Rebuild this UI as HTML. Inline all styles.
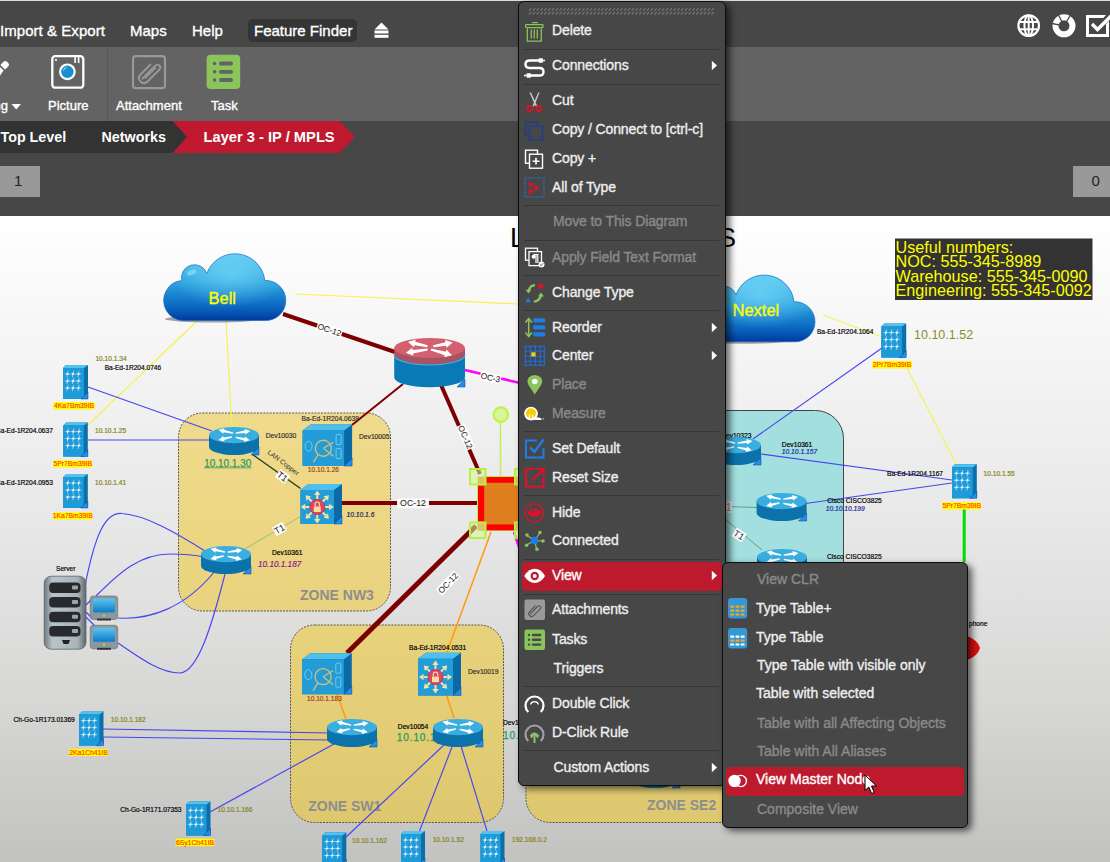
<!DOCTYPE html><html><head><meta charset="utf-8"><title>Diagram</title><style>
*{margin:0;padding:0;box-sizing:border-box}
html,body{width:1110px;height:862px;overflow:hidden;background:#474747;font-family:"Liberation Sans",sans-serif}
.t{position:absolute;white-space:nowrap;line-height:1;-webkit-text-stroke:0.35px currentColor}
.nb{-webkit-text-stroke:0}
.abs{position:absolute}
svg{position:absolute;overflow:visible}
</style></head><body>
<svg style="left:0;top:216px" width="1110" height="646" viewBox="0 216 1110 646" font-family="Liberation Sans, sans-serif"><defs>
<linearGradient id="bg" x1="0" y1="216" x2="0" y2="862" gradientUnits="userSpaceOnUse">
<stop offset="0" stop-color="#ffffff"/><stop offset="0.45" stop-color="#e9e9e9"/><stop offset="0.75" stop-color="#d7d7d6"/><stop offset="1" stop-color="#c2c2c0"/></linearGradient>
<linearGradient id="zone" x1="0" y1="216" x2="0" y2="862" gradientUnits="userSpaceOnUse">
<stop offset="0" stop-color="#f6e29e"/><stop offset="0.5" stop-color="#ecd682"/><stop offset="1" stop-color="#dcc66c"/></linearGradient>
<linearGradient id="cloudg" x1="0" y1="0" x2="0" y2="1">
<stop offset="0" stop-color="#5ccbef"/><stop offset="0.45" stop-color="#2a9fdc"/><stop offset="0.8" stop-color="#0a66c0"/><stop offset="1" stop-color="#003a9c"/></linearGradient>
<radialGradient id="cloudh" cx="0.55" cy="0.3" r="0.5"><stop offset="0" stop-color="#7fe0ff" stop-opacity="0.6"/><stop offset="1" stop-color="#7fe0ff" stop-opacity="0"/></radialGradient>
<linearGradient id="srv" x1="0" y1="0" x2="1" y2="0"><stop offset="0" stop-color="#6d7880"/><stop offset="0.2" stop-color="#b9c4ca"/><stop offset="0.8" stop-color="#a9b4ba"/><stop offset="1" stop-color="#5d686e"/></linearGradient>
<linearGradient id="scr" x1="0" y1="0" x2="0" y2="1"><stop offset="0" stop-color="#5ec4f0"/><stop offset="1" stop-color="#0a7cc8"/></linearGradient>
</defs><rect x="0" y="216" width="1110" height="646" fill="url(#bg)"/><rect x="178.5" y="413" width="212" height="198" rx="24" fill="url(#zone)" stroke="#555" stroke-width="1" stroke-dasharray="2 1.2"/><rect x="290.5" y="625" width="213" height="197.5" rx="24" fill="url(#zone)" stroke="#555" stroke-width="1" stroke-dasharray="2 1.2"/><rect x="526" y="600" width="260" height="222.5" rx="24" fill="url(#zone)" stroke="#555" stroke-width="1" stroke-dasharray="2 1.2"/><rect x="640" y="410.5" width="203.5" height="300" rx="28" fill="#a3dfdf" stroke="#444" stroke-width="1"/><text x="300" y="599.6" font-size="14" fill="#8e8e8e" font-weight="bold">ZONE NW3</text><text x="308.2" y="810.6" font-size="14" fill="#8e8e8e" font-weight="bold">ZONE SW1</text><text x="647" y="810.4" font-size="14" fill="#8e8e8e" font-weight="bold">ZONE SE2</text><text x="510" y="246.5" font-size="27" fill="#000" >L</text><text x="718" y="246.5" font-size="27" fill="#000" >S</text><rect x="895" y="238.5" width="197.5" height="61.5" fill="#333"/><text x="895.5" y="252.7" font-size="16.2" fill="#ffff00" >Useful numbers:</text><text x="895.5" y="267.2" font-size="16.2" fill="#ffff00" >NOC: 555-345-8989</text><text x="895.5" y="281.7" font-size="16.2" fill="#ffff00" >Warehouse: 555-345-0090</text><text x="895.5" y="296.2" font-size="16.2" fill="#ffff00" >Engineering: 555-345-0092</text><line x1="197" y1="321" x2="88" y2="425" stroke="#f6f250" stroke-width="1.15" /><line x1="226" y1="321" x2="232" y2="428" stroke="#f6f250" stroke-width="1.15" /><line x1="295" y1="294" x2="720" y2="313" stroke="#f6f250" stroke-width="1.15" /><line x1="823" y1="315" x2="882" y2="337" stroke="#f6f250" stroke-width="1.15" /><line x1="907" y1="368" x2="956" y2="464" stroke="#f6f250" stroke-width="1.15" /><line x1="88" y1="387" x2="212" y2="431" stroke="#4646f2" stroke-width="1.15" /><line x1="88" y1="440" x2="211" y2="440" stroke="#4646f2" stroke-width="1.15" /><path d="M85 586 C 95 535, 105 512, 122 513.5 C 145 515, 175 532, 205 551" fill="none" stroke="#4646f2" stroke-width="1.15"/><path d="M96 596 C 120 572, 140 554, 170 554 C 185 554, 195 555, 205 557" fill="none" stroke="#4646f2" stroke-width="1.15"/><path d="M118 618 C 150 620, 185 608, 215 571" fill="none" stroke="#4646f2" stroke-width="1.15"/><path d="M118 643 C 140 658, 160 673, 180 673 C 198 672, 212 625, 225 574" fill="none" stroke="#4646f2" stroke-width="1.15"/><line x1="86" y1="605" x2="92" y2="599" stroke="#4646f2" stroke-width="1.15" /><line x1="86" y1="612" x2="92" y2="618" stroke="#4646f2" stroke-width="1.15" /><line x1="86" y1="617" x2="95" y2="626" stroke="#4646f2" stroke-width="1.15" /><line x1="103" y1="729" x2="330" y2="733" stroke="#4646f2" stroke-width="1.15" /><line x1="103" y1="737" x2="330" y2="740" stroke="#4646f2" stroke-width="1.15" /><line x1="210" y1="812" x2="334" y2="744" stroke="#4646f2" stroke-width="1.15" /><line x1="444" y1="745" x2="345" y2="838" stroke="#4646f2" stroke-width="1.15" /><line x1="452" y1="747" x2="419.5" y2="831" stroke="#4646f2" stroke-width="1.15" /><line x1="461" y1="746" x2="487" y2="831" stroke="#4646f2" stroke-width="1.15" /><line x1="753" y1="439" x2="882" y2="348" stroke="#4646f2" stroke-width="1.15" /><line x1="761" y1="454" x2="952" y2="480" stroke="#4646f2" stroke-width="1.15" /><line x1="805.5" y1="503.5" x2="952" y2="483" stroke="#4646f2" stroke-width="1.15" /><line x1="283" y1="314" x2="395" y2="352" stroke="#7d0000" stroke-width="4" /><line x1="441" y1="385" x2="480" y2="474" stroke="#7d0000" stroke-width="4" /><line x1="403" y1="384" x2="352" y2="425" stroke="#7d0000" stroke-width="2" /><line x1="342" y1="503" x2="477" y2="503" stroke="#7d0000" stroke-width="4" /><line x1="476" y1="526" x2="347" y2="653" stroke="#7d0000" stroke-width="5" /><line x1="465" y1="370" x2="520" y2="383" stroke="#ff00ff" stroke-width="2.5" /><line x1="514" y1="532" x2="520" y2="550" stroke="#ff00ff" stroke-width="2.5" /><line x1="491" y1="532" x2="447" y2="652" stroke="#ff9a10" stroke-width="1.5" /><line x1="337" y1="694" x2="346" y2="719" stroke="#ff9a10" stroke-width="1.5" /><line x1="446.5" y1="695" x2="454" y2="718" stroke="#ff9a10" stroke-width="1.5" /><line x1="500.5" y1="422" x2="500.5" y2="477" stroke="#c0f050" stroke-width="1.5" /><line x1="245.5" y1="548.5" x2="300.5" y2="516.5" stroke="#90c080" stroke-width="1" /><line x1="252" y1="454" x2="300.5" y2="488.5" stroke="#1a3a1a" stroke-width="1.3" /><line x1="964.2" y1="509" x2="964.2" y2="562" stroke="#00dd00" stroke-width="3" /><line x1="726" y1="506.5" x2="757" y2="507.5" stroke="#60a080" stroke-width="1" /><line x1="726" y1="520" x2="762" y2="550" stroke="#60a080" stroke-width="1" /><g transform="translate(282,464.5) rotate(37)"><text x="0" y="0" font-size="6.8" fill="#333" text-anchor="middle">LAN Copper</text></g><g transform="translate(329.5,329.7) rotate(18.6)"><rect x="-13.034999999999998" y="-4.565" width="26.069999999999997" height="9.13" fill="#fff" opacity="0.95"/><text x="0" y="2.988" font-size="8.3" fill="#222" text-anchor="middle">OC-12</text></g><g transform="translate(465.5,437) rotate(66)"><rect x="-13.034999999999998" y="-4.565" width="26.069999999999997" height="9.13" fill="#fff" opacity="0.95"/><text x="0" y="2.988" font-size="8.3" fill="#222" text-anchor="middle">OC-12</text></g><g transform="translate(413,503.3) rotate(0)"><rect x="-16.0" y="-4.840000000000001" width="32" height="9.680000000000001" fill="#fff" opacity="0.95"/><text x="0" y="3.168" font-size="8.8" fill="#222" text-anchor="middle">OC-12</text></g><g transform="translate(448,583) rotate(-47)"><rect x="-13.034999999999998" y="-4.565" width="26.069999999999997" height="9.13" fill="#fff" opacity="0.95"/><text x="0" y="2.988" font-size="8.3" fill="#222" text-anchor="middle">OC-12</text></g><g transform="translate(490.5,377.5) rotate(13)"><rect x="-10.628" y="-4.565" width="21.256" height="9.13" fill="#fff" opacity="0.95"/><text x="0" y="2.988" font-size="8.3" fill="#222" text-anchor="middle">OC-3</text></g><g transform="translate(282.5,476.5) rotate(36)"><rect x="-6.0" y="-4.95" width="12" height="9.9" fill="#fff" opacity="0.95"/><text x="0" y="3.2399999999999998" font-size="9" fill="#222" text-anchor="middle">T1</text></g><g transform="translate(279.5,529) rotate(-30)"><rect x="-6.0" y="-4.95" width="12" height="9.9" fill="#fff" opacity="0.95"/><text x="0" y="3.2399999999999998" font-size="9" fill="#222" text-anchor="middle">T1</text></g><g transform="translate(739,535) rotate(33)"><rect x="-6.0" y="-4.95" width="12" height="9.9" fill="#fff" opacity="0.95"/><text x="0" y="3.2399999999999998" font-size="9" fill="#222" text-anchor="middle">T1</text></g><rect x="725" y="501" width="7" height="12" fill="#e8e8e8"/><text x="726" y="511" font-size="10" fill="#888">1</text><ellipse cx="212.8" cy="319.0" rx="48" ry="3.5" fill="#000" opacity="0.35"/><path d="M182.8 320.5 A20 20 0 0 1 165.8 291.5 A20 20 0 0 1 181.8 280.5 A13 13 0 0 1 206.8 273.5 A30 30 0 0 1 264.8 280.5 A20 20 0 0 1 285.8 300.5 A20 20 0 0 1 265.8 320.5 Z" fill="url(#cloudg)"/><path d="M182.8 320.5 A20 20 0 0 1 165.8 291.5 A20 20 0 0 1 181.8 280.5 A13 13 0 0 1 206.8 273.5 A30 30 0 0 1 264.8 280.5 A20 20 0 0 1 285.8 300.5 A20 20 0 0 1 265.8 320.5 Z" fill="url(#cloudh)" stroke="#1a6cc4" stroke-width="0.7"/><ellipse cx="191.8" cy="272.5" rx="5" ry="2.5" fill="#a8ecff" opacity="0.5" transform="rotate(-20 191.8 272.5)"/><text x="208.5" y="303.5" font-size="16.5" fill="#ffff00" stroke="#ffff00" stroke-width="0.35">Bell</text><ellipse cx="742" cy="340.3" rx="48" ry="3.5" fill="#000" opacity="0.35"/><path d="M712 341.8 A20 20 0 0 1 695 312.8 A20 20 0 0 1 711 301.8 A13 13 0 0 1 736 294.8 A30 30 0 0 1 794 301.8 A20 20 0 0 1 815 321.8 A20 20 0 0 1 795 341.8 Z" fill="url(#cloudg)"/><path d="M712 341.8 A20 20 0 0 1 695 312.8 A20 20 0 0 1 711 301.8 A13 13 0 0 1 736 294.8 A30 30 0 0 1 794 301.8 A20 20 0 0 1 815 321.8 A20 20 0 0 1 795 341.8 Z" fill="url(#cloudh)" stroke="#1a6cc4" stroke-width="0.7"/><ellipse cx="721" cy="293.8" rx="5" ry="2.5" fill="#a8ecff" opacity="0.5" transform="rotate(-20 721 293.8)"/><text x="732.5" y="315.7" font-size="16.5" fill="#ffff00" stroke="#ffff00" stroke-width="0.35">Nextel</text><text x="721" y="437.5" font-size="6.7" fill="#000"  stroke="#000" stroke-width="0.18">Dev10323</text><text x="396.8" y="740.5" font-size="10" fill="#2a9a5a" letter-spacing="0.9" stroke="#2a9a5a" stroke-width="0.25">10.10.1.1</text><path d="M209 435.12 V446.88 A25.0 8.12 0 0 0 259 446.88 V435.12Z" fill="#0b73a9"/><ellipse cx="234.0" cy="435.12" rx="25.0" ry="8.12" fill="#3aaee0"/><path d="M233.33 432.45 L224.15 429.76 L224.47 428.29 L218.50 429.87 L223.29 433.77 L223.60 432.30 L233.07 433.63Z" fill="#fff"/><path d="M235.78 433.63 L245.14 433.02 L245.35 434.50 L250.40 430.96 L244.56 428.96 L244.77 430.44 L235.62 432.45Z" fill="#fff"/><path d="M231.76 436.22 L223.55 437.44 L223.21 435.98 L218.50 439.97 L224.50 441.43 L224.15 439.97 L232.04 437.39Z" fill="#fff"/><path d="M235.57 437.88 L244.15 440.47 L243.83 441.93 L249.80 440.37 L245.02 436.46 L244.70 437.93 L235.83 436.71Z" fill="#fff"/><path d="M259 447 L259 455 L251 455Z" fill="#1e8ef0" stroke="#0a3a8a" stroke-width="0.5"/><path d="M201 554.12 V565.88 A25.0 8.12 0 0 0 251 565.88 V554.12Z" fill="#0b73a9"/><ellipse cx="226.0" cy="554.12" rx="25.0" ry="8.12" fill="#3aaee0"/><path d="M225.33 551.45 L216.15 548.76 L216.47 547.29 L210.50 548.87 L215.29 552.77 L215.60 551.30 L225.07 552.63Z" fill="#fff"/><path d="M227.78 552.63 L237.14 552.02 L237.35 553.50 L242.40 549.96 L236.56 547.96 L236.77 549.44 L227.62 551.45Z" fill="#fff"/><path d="M223.76 555.22 L215.55 556.44 L215.21 554.98 L210.50 558.97 L216.50 560.43 L216.15 558.97 L224.04 556.39Z" fill="#fff"/><path d="M227.57 556.88 L236.15 559.47 L235.83 560.93 L241.80 559.37 L237.02 555.46 L236.70 556.93 L227.83 555.71Z" fill="#fff"/><path d="M251 566 L251 574 L243 574Z" fill="#1e8ef0" stroke="#0a3a8a" stroke-width="0.5"/><path d="M327 727.12 V738.88 A25.0 8.12 0 0 0 377 738.88 V727.12Z" fill="#0b73a9"/><ellipse cx="352.0" cy="727.12" rx="25.0" ry="8.12" fill="#3aaee0"/><path d="M351.33 724.45 L342.15 721.76 L342.47 720.29 L336.50 721.87 L341.29 725.77 L341.60 724.30 L351.07 725.63Z" fill="#fff"/><path d="M353.78 725.63 L363.14 725.02 L363.35 726.50 L368.40 722.96 L362.56 720.96 L362.77 722.44 L353.62 724.45Z" fill="#fff"/><path d="M349.76 728.22 L341.55 729.44 L341.21 727.98 L336.50 731.97 L342.50 733.43 L342.15 731.97 L350.04 729.39Z" fill="#fff"/><path d="M353.57 729.88 L362.15 732.47 L361.83 733.93 L367.80 732.37 L363.02 728.46 L362.70 729.93 L353.83 728.71Z" fill="#fff"/><path d="M377 739 L377 747 L369 747Z" fill="#1e8ef0" stroke="#0a3a8a" stroke-width="0.5"/><path d="M433 727.12 V738.88 A25.0 8.12 0 0 0 483 738.88 V727.12Z" fill="#0b73a9"/><ellipse cx="458.0" cy="727.12" rx="25.0" ry="8.12" fill="#3aaee0"/><path d="M457.33 724.45 L448.15 721.76 L448.47 720.29 L442.50 721.87 L447.29 725.77 L447.60 724.30 L457.07 725.63Z" fill="#fff"/><path d="M459.78 725.63 L469.14 725.02 L469.35 726.50 L474.40 722.96 L468.56 720.96 L468.77 722.44 L459.62 724.45Z" fill="#fff"/><path d="M455.76 728.22 L447.55 729.44 L447.21 727.98 L442.50 731.97 L448.50 733.43 L448.15 731.97 L456.04 729.39Z" fill="#fff"/><path d="M459.57 729.88 L468.15 732.47 L467.83 733.93 L473.80 732.37 L469.02 728.46 L468.70 729.93 L459.83 728.71Z" fill="#fff"/><path d="M483 739 L483 747 L475 747Z" fill="#1e8ef0" stroke="#0a3a8a" stroke-width="0.5"/><path d="M711 445.12 V456.88 A25.0 8.12 0 0 0 761 456.88 V445.12Z" fill="#0b73a9"/><ellipse cx="736.0" cy="445.12" rx="25.0" ry="8.12" fill="#3aaee0"/><path d="M735.33 442.45 L726.15 439.76 L726.47 438.29 L720.50 439.87 L725.29 443.77 L725.60 442.30 L735.07 443.63Z" fill="#fff"/><path d="M737.78 443.63 L747.14 443.02 L747.35 444.50 L752.40 440.96 L746.56 438.96 L746.77 440.44 L737.62 442.45Z" fill="#fff"/><path d="M733.76 446.22 L725.55 447.44 L725.21 445.98 L720.50 449.97 L726.50 451.43 L726.15 449.97 L734.04 447.39Z" fill="#fff"/><path d="M737.57 447.88 L746.15 450.47 L745.83 451.93 L751.80 450.37 L747.02 446.46 L746.70 447.93 L737.83 446.71Z" fill="#fff"/><path d="M761 457 L761 465 L753 465Z" fill="#1e8ef0" stroke="#0a3a8a" stroke-width="0.5"/><path d="M756.6 501.12 V512.88 A25.0 8.12 0 0 0 806.6 512.88 V501.12Z" fill="#0b73a9"/><ellipse cx="781.6" cy="501.12" rx="25.0" ry="8.12" fill="#3aaee0"/><path d="M780.93 498.45 L771.75 495.76 L772.07 494.29 L766.10 495.87 L770.89 499.77 L771.20 498.30 L780.67 499.63Z" fill="#fff"/><path d="M783.38 499.63 L792.74 499.02 L792.95 500.50 L798.00 496.96 L792.16 494.96 L792.37 496.44 L783.22 498.45Z" fill="#fff"/><path d="M779.36 502.22 L771.15 503.44 L770.81 501.98 L766.10 505.97 L772.10 507.43 L771.75 505.97 L779.64 503.39Z" fill="#fff"/><path d="M783.17 503.88 L791.75 506.47 L791.43 507.93 L797.40 506.37 L792.62 502.46 L792.30 503.93 L783.43 502.71Z" fill="#fff"/><path d="M806.6 513 L806.6 521 L798.6 521Z" fill="#1e8ef0" stroke="#0a3a8a" stroke-width="0.5"/><path d="M757 557.12 V568.88 A25.0 8.12 0 0 0 807 568.88 V557.12Z" fill="#0b73a9"/><ellipse cx="782.0" cy="557.12" rx="25.0" ry="8.12" fill="#3aaee0"/><path d="M781.33 554.45 L772.15 551.76 L772.47 550.29 L766.50 551.87 L771.29 555.77 L771.60 554.30 L781.07 555.63Z" fill="#fff"/><path d="M783.78 555.63 L793.14 555.02 L793.35 556.50 L798.40 552.96 L792.56 550.96 L792.77 552.44 L783.62 554.45Z" fill="#fff"/><path d="M779.76 558.22 L771.55 559.44 L771.21 557.98 L766.50 561.97 L772.50 563.43 L772.15 561.97 L780.04 559.39Z" fill="#fff"/><path d="M783.57 559.88 L792.15 562.47 L791.83 563.93 L797.80 562.37 L793.02 558.46 L792.70 559.93 L783.83 558.71Z" fill="#fff"/><path d="M807 569 L807 577 L799 577Z" fill="#1e8ef0" stroke="#0a3a8a" stroke-width="0.5"/><path d="M630 768.12 V779.88 A25.0 8.12 0 0 0 680 779.88 V768.12Z" fill="#0b73a9"/><ellipse cx="655.0" cy="768.12" rx="25.0" ry="8.12" fill="#3aaee0"/><path d="M654.33 765.45 L645.15 762.76 L645.47 761.29 L639.50 762.87 L644.29 766.77 L644.60 765.30 L654.07 766.63Z" fill="#fff"/><path d="M656.78 766.63 L666.14 766.02 L666.35 767.50 L671.40 763.96 L665.56 761.96 L665.77 763.44 L656.62 765.45Z" fill="#fff"/><path d="M652.76 769.22 L644.55 770.44 L644.21 768.98 L639.50 772.97 L645.50 774.43 L645.15 772.97 L653.04 770.39Z" fill="#fff"/><path d="M656.57 770.88 L665.15 773.47 L664.83 774.93 L670.80 773.37 L666.02 769.46 L665.70 770.93 L656.83 769.71Z" fill="#fff"/><path d="M680 780 L680 788 L672 788Z" fill="#1e8ef0" stroke="#0a3a8a" stroke-width="0.5"/><path d="M394.2 355 V377.3 A35.4 10 0 0 0 465.0 377.3 V355Z" fill="#0a7ab6"/><path d="M394.2 348 V355 A35.4 10 0 0 0 465.0 355 V348Z" fill="#a65463"/><path d="M394.2 355 A35.4 10 0 0 0 465.0 355" fill="none" stroke="#3ab4ea" stroke-width="1.1"/><ellipse cx="429.59999999999997" cy="348" rx="35.4" ry="10" fill="#d35f6f"/><path d="M427.72 345.32 L415.22 341.68 L415.71 339.54 L408.00 341.90 L413.95 347.34 L414.43 345.20 L427.28 347.28Z" fill="#fff"/><path d="M433.39 347.28 L446.16 345.67 L446.57 347.83 L452.70 342.60 L445.08 339.98 L445.49 342.14 L433.01 345.32Z" fill="#fff"/><path d="M427.35 348.51 L412.56 349.89 L412.24 347.72 L405.90 352.70 L413.41 355.63 L413.09 353.45 L427.65 350.49Z" fill="#fff"/><path d="M430.73 350.46 L444.77 355.17 L444.19 357.29 L452.00 355.30 L446.32 349.58 L445.73 351.70 L431.27 348.54Z" fill="#fff"/><path d="M465 379 L465 387 L457 387Z" fill="#1e8ef0" stroke="#0a3a8a" stroke-width="0.5"/><path d="M63 368 L66 365 H88 V397 L85 399 H63Z" fill="#0c6fa8"/><path d="M63 368 L66 365 H88 L84 368Z" fill="#52c3f0"/><rect x="63" y="368" width="21" height="31" fill="#1d9ad8"/><path d="M64.9 374H70.1M68.1 370.8L66.9 377.2M70.4 374H75.6M73.6 370.8L72.4 377.2M75.9 374H81.1M79.1 370.8L77.9 377.2M64.9 381H70.1M68.1 377.8L66.9 384.2M70.4 381H75.6M73.6 377.8L72.4 384.2M75.9 381H81.1M79.1 377.8L77.9 384.2M64.9 388H70.1M68.1 384.8L66.9 391.2M70.4 388H75.6M73.6 384.8L72.4 391.2M75.9 388H81.1M79.1 384.8L77.9 391.2" stroke="#cfe6f4" stroke-width="0.7"/><circle cx="67.5" cy="374" r="1.1" fill="#f4faff"/><circle cx="73.0" cy="374" r="1.1" fill="#f4faff"/><circle cx="78.5" cy="374" r="1.1" fill="#f4faff"/><circle cx="67.5" cy="381" r="1.1" fill="#f4faff"/><circle cx="73.0" cy="381" r="1.1" fill="#f4faff"/><circle cx="78.5" cy="381" r="1.1" fill="#f4faff"/><circle cx="67.5" cy="388" r="1.1" fill="#f4faff"/><circle cx="73.0" cy="388" r="1.1" fill="#f4faff"/><circle cx="78.5" cy="388" r="1.1" fill="#f4faff"/><path d="M88 392 L88 399 L81 399Z" fill="#1e8ef0" stroke="#0a3a8a" stroke-width="0.5"/><path d="M63.3 425.6 L66.3 422.6 H87.8 V454.6 L84.8 456.6 H63.3Z" fill="#0c6fa8"/><path d="M63.3 425.6 L66.3 422.6 H87.8 L83.8 425.6Z" fill="#52c3f0"/><rect x="63.3" y="425.6" width="20.5" height="31" fill="#1d9ad8"/><path d="M65.2 431.6H70.39999999999999M68.39999999999999 428.40000000000003L67.2 434.8M70.7 431.6H75.89999999999999M73.89999999999999 428.40000000000003L72.7 434.8M76.2 431.6H81.39999999999999M79.39999999999999 428.40000000000003L78.2 434.8M65.2 438.6H70.39999999999999M68.39999999999999 435.40000000000003L67.2 441.8M70.7 438.6H75.89999999999999M73.89999999999999 435.40000000000003L72.7 441.8M76.2 438.6H81.39999999999999M79.39999999999999 435.40000000000003L78.2 441.8M65.2 445.6H70.39999999999999M68.39999999999999 442.40000000000003L67.2 448.8M70.7 445.6H75.89999999999999M73.89999999999999 442.40000000000003L72.7 448.8M76.2 445.6H81.39999999999999M79.39999999999999 442.40000000000003L78.2 448.8" stroke="#cfe6f4" stroke-width="0.7"/><circle cx="67.8" cy="431.6" r="1.1" fill="#f4faff"/><circle cx="73.3" cy="431.6" r="1.1" fill="#f4faff"/><circle cx="78.8" cy="431.6" r="1.1" fill="#f4faff"/><circle cx="67.8" cy="438.6" r="1.1" fill="#f4faff"/><circle cx="73.3" cy="438.6" r="1.1" fill="#f4faff"/><circle cx="78.8" cy="438.6" r="1.1" fill="#f4faff"/><circle cx="67.8" cy="445.6" r="1.1" fill="#f4faff"/><circle cx="73.3" cy="445.6" r="1.1" fill="#f4faff"/><circle cx="78.8" cy="445.6" r="1.1" fill="#f4faff"/><path d="M87.8 449.6 L87.8 456.6 L80.8 456.6Z" fill="#1e8ef0" stroke="#0a3a8a" stroke-width="0.5"/><path d="M63.3 477 L66.3 474 H87.8 V506 L84.8 508 H63.3Z" fill="#0c6fa8"/><path d="M63.3 477 L66.3 474 H87.8 L83.8 477Z" fill="#52c3f0"/><rect x="63.3" y="477" width="20.5" height="31" fill="#1d9ad8"/><path d="M65.2 483H70.39999999999999M68.39999999999999 479.8L67.2 486.2M70.7 483H75.89999999999999M73.89999999999999 479.8L72.7 486.2M76.2 483H81.39999999999999M79.39999999999999 479.8L78.2 486.2M65.2 490H70.39999999999999M68.39999999999999 486.8L67.2 493.2M70.7 490H75.89999999999999M73.89999999999999 486.8L72.7 493.2M76.2 490H81.39999999999999M79.39999999999999 486.8L78.2 493.2M65.2 497H70.39999999999999M68.39999999999999 493.8L67.2 500.2M70.7 497H75.89999999999999M73.89999999999999 493.8L72.7 500.2M76.2 497H81.39999999999999M79.39999999999999 493.8L78.2 500.2" stroke="#cfe6f4" stroke-width="0.7"/><circle cx="67.8" cy="483" r="1.1" fill="#f4faff"/><circle cx="73.3" cy="483" r="1.1" fill="#f4faff"/><circle cx="78.8" cy="483" r="1.1" fill="#f4faff"/><circle cx="67.8" cy="490" r="1.1" fill="#f4faff"/><circle cx="73.3" cy="490" r="1.1" fill="#f4faff"/><circle cx="78.8" cy="490" r="1.1" fill="#f4faff"/><circle cx="67.8" cy="497" r="1.1" fill="#f4faff"/><circle cx="73.3" cy="497" r="1.1" fill="#f4faff"/><circle cx="78.8" cy="497" r="1.1" fill="#f4faff"/><path d="M87.8 501 L87.8 508 L80.8 508Z" fill="#1e8ef0" stroke="#0a3a8a" stroke-width="0.5"/><path d="M79 714.6 L82 711.6 H103.5 V743.6 L100.5 745.6 H79Z" fill="#0c6fa8"/><path d="M79 714.6 L82 711.6 H103.5 L99.5 714.6Z" fill="#52c3f0"/><rect x="79" y="714.6" width="20.5" height="31" fill="#1d9ad8"/><path d="M80.9 720.6H86.1M84.1 717.4L82.9 723.8000000000001M86.4 720.6H91.6M89.6 717.4L88.4 723.8000000000001M91.9 720.6H97.1M95.1 717.4L93.9 723.8000000000001M80.9 727.6H86.1M84.1 724.4L82.9 730.8000000000001M86.4 727.6H91.6M89.6 724.4L88.4 730.8000000000001M91.9 727.6H97.1M95.1 724.4L93.9 730.8000000000001M80.9 734.6H86.1M84.1 731.4L82.9 737.8000000000001M86.4 734.6H91.6M89.6 731.4L88.4 737.8000000000001M91.9 734.6H97.1M95.1 731.4L93.9 737.8000000000001" stroke="#cfe6f4" stroke-width="0.7"/><circle cx="83.5" cy="720.6" r="1.1" fill="#f4faff"/><circle cx="89.0" cy="720.6" r="1.1" fill="#f4faff"/><circle cx="94.5" cy="720.6" r="1.1" fill="#f4faff"/><circle cx="83.5" cy="727.6" r="1.1" fill="#f4faff"/><circle cx="89.0" cy="727.6" r="1.1" fill="#f4faff"/><circle cx="94.5" cy="727.6" r="1.1" fill="#f4faff"/><circle cx="83.5" cy="734.6" r="1.1" fill="#f4faff"/><circle cx="89.0" cy="734.6" r="1.1" fill="#f4faff"/><circle cx="94.5" cy="734.6" r="1.1" fill="#f4faff"/><path d="M103.5 738.6 L103.5 745.6 L96.5 745.6Z" fill="#1e8ef0" stroke="#0a3a8a" stroke-width="0.5"/><path d="M186 804.4 L189 801.4 H210.5 V833.4 L207.5 835.4 H186Z" fill="#0c6fa8"/><path d="M186 804.4 L189 801.4 H210.5 L206.5 804.4Z" fill="#52c3f0"/><rect x="186" y="804.4" width="20.5" height="31" fill="#1d9ad8"/><path d="M187.9 810.4H193.1M191.1 807.1999999999999L189.9 813.6M193.4 810.4H198.6M196.6 807.1999999999999L195.4 813.6M198.9 810.4H204.1M202.1 807.1999999999999L200.9 813.6M187.9 817.4H193.1M191.1 814.1999999999999L189.9 820.6M193.4 817.4H198.6M196.6 814.1999999999999L195.4 820.6M198.9 817.4H204.1M202.1 814.1999999999999L200.9 820.6M187.9 824.4H193.1M191.1 821.1999999999999L189.9 827.6M193.4 824.4H198.6M196.6 821.1999999999999L195.4 827.6M198.9 824.4H204.1M202.1 821.1999999999999L200.9 827.6" stroke="#cfe6f4" stroke-width="0.7"/><circle cx="190.5" cy="810.4" r="1.1" fill="#f4faff"/><circle cx="196.0" cy="810.4" r="1.1" fill="#f4faff"/><circle cx="201.5" cy="810.4" r="1.1" fill="#f4faff"/><circle cx="190.5" cy="817.4" r="1.1" fill="#f4faff"/><circle cx="196.0" cy="817.4" r="1.1" fill="#f4faff"/><circle cx="201.5" cy="817.4" r="1.1" fill="#f4faff"/><circle cx="190.5" cy="824.4" r="1.1" fill="#f4faff"/><circle cx="196.0" cy="824.4" r="1.1" fill="#f4faff"/><circle cx="201.5" cy="824.4" r="1.1" fill="#f4faff"/><path d="M210.5 828.4 L210.5 835.4 L203.5 835.4Z" fill="#1e8ef0" stroke="#0a3a8a" stroke-width="0.5"/><path d="M322.3 835.5 L325.3 832.5 H346.3 V864.5 L343.3 866.5 H322.3Z" fill="#0c6fa8"/><path d="M322.3 835.5 L325.3 832.5 H346.3 L342.3 835.5Z" fill="#52c3f0"/><rect x="322.3" y="835.5" width="20" height="31" fill="#1d9ad8"/><path d="M324.2 841.5H329.40000000000003M327.40000000000003 838.3L326.2 844.7M329.7 841.5H334.90000000000003M332.90000000000003 838.3L331.7 844.7M335.2 841.5H340.40000000000003M338.40000000000003 838.3L337.2 844.7M324.2 848.5H329.40000000000003M327.40000000000003 845.3L326.2 851.7M329.7 848.5H334.90000000000003M332.90000000000003 845.3L331.7 851.7M335.2 848.5H340.40000000000003M338.40000000000003 845.3L337.2 851.7M324.2 855.5H329.40000000000003M327.40000000000003 852.3L326.2 858.7M329.7 855.5H334.90000000000003M332.90000000000003 852.3L331.7 858.7M335.2 855.5H340.40000000000003M338.40000000000003 852.3L337.2 858.7" stroke="#cfe6f4" stroke-width="0.7"/><circle cx="326.8" cy="841.5" r="1.1" fill="#f4faff"/><circle cx="332.3" cy="841.5" r="1.1" fill="#f4faff"/><circle cx="337.8" cy="841.5" r="1.1" fill="#f4faff"/><circle cx="326.8" cy="848.5" r="1.1" fill="#f4faff"/><circle cx="332.3" cy="848.5" r="1.1" fill="#f4faff"/><circle cx="337.8" cy="848.5" r="1.1" fill="#f4faff"/><circle cx="326.8" cy="855.5" r="1.1" fill="#f4faff"/><circle cx="332.3" cy="855.5" r="1.1" fill="#f4faff"/><circle cx="337.8" cy="855.5" r="1.1" fill="#f4faff"/><path d="M346.3 859.5 L346.3 866.5 L339.3 866.5Z" fill="#1e8ef0" stroke="#0a3a8a" stroke-width="0.5"/><path d="M401 834 L404 831 H425 V863 L422 865 H401Z" fill="#0c6fa8"/><path d="M401 834 L404 831 H425 L421 834Z" fill="#52c3f0"/><rect x="401" y="834" width="20" height="31" fill="#1d9ad8"/><path d="M402.9 840H408.1M406.1 836.8L404.9 843.2M408.4 840H413.6M411.6 836.8L410.4 843.2M413.9 840H419.1M417.1 836.8L415.9 843.2M402.9 847H408.1M406.1 843.8L404.9 850.2M408.4 847H413.6M411.6 843.8L410.4 850.2M413.9 847H419.1M417.1 843.8L415.9 850.2M402.9 854H408.1M406.1 850.8L404.9 857.2M408.4 854H413.6M411.6 850.8L410.4 857.2M413.9 854H419.1M417.1 850.8L415.9 857.2" stroke="#cfe6f4" stroke-width="0.7"/><circle cx="405.5" cy="840" r="1.1" fill="#f4faff"/><circle cx="411.0" cy="840" r="1.1" fill="#f4faff"/><circle cx="416.5" cy="840" r="1.1" fill="#f4faff"/><circle cx="405.5" cy="847" r="1.1" fill="#f4faff"/><circle cx="411.0" cy="847" r="1.1" fill="#f4faff"/><circle cx="416.5" cy="847" r="1.1" fill="#f4faff"/><circle cx="405.5" cy="854" r="1.1" fill="#f4faff"/><circle cx="411.0" cy="854" r="1.1" fill="#f4faff"/><circle cx="416.5" cy="854" r="1.1" fill="#f4faff"/><path d="M425 858 L425 865 L418 865Z" fill="#1e8ef0" stroke="#0a3a8a" stroke-width="0.5"/><path d="M480.5 834 L483.5 831 H504.5 V863 L501.5 865 H480.5Z" fill="#0c6fa8"/><path d="M480.5 834 L483.5 831 H504.5 L500.5 834Z" fill="#52c3f0"/><rect x="480.5" y="834" width="20" height="31" fill="#1d9ad8"/><path d="M482.4 840H487.6M485.6 836.8L484.4 843.2M487.9 840H493.1M491.1 836.8L489.9 843.2M493.4 840H498.6M496.6 836.8L495.4 843.2M482.4 847H487.6M485.6 843.8L484.4 850.2M487.9 847H493.1M491.1 843.8L489.9 850.2M493.4 847H498.6M496.6 843.8L495.4 850.2M482.4 854H487.6M485.6 850.8L484.4 857.2M487.9 854H493.1M491.1 850.8L489.9 857.2M493.4 854H498.6M496.6 850.8L495.4 857.2" stroke="#cfe6f4" stroke-width="0.7"/><circle cx="485.0" cy="840" r="1.1" fill="#f4faff"/><circle cx="490.5" cy="840" r="1.1" fill="#f4faff"/><circle cx="496.0" cy="840" r="1.1" fill="#f4faff"/><circle cx="485.0" cy="847" r="1.1" fill="#f4faff"/><circle cx="490.5" cy="847" r="1.1" fill="#f4faff"/><circle cx="496.0" cy="847" r="1.1" fill="#f4faff"/><circle cx="485.0" cy="854" r="1.1" fill="#f4faff"/><circle cx="490.5" cy="854" r="1.1" fill="#f4faff"/><circle cx="496.0" cy="854" r="1.1" fill="#f4faff"/><path d="M504.5 858 L504.5 865 L497.5 865Z" fill="#1e8ef0" stroke="#0a3a8a" stroke-width="0.5"/><path d="M881.4 326.6 L884.4 323.6 H906.1999999999999 V355.6 L903.1999999999999 357.6 H881.4Z" fill="#0c6fa8"/><path d="M881.4 326.6 L884.4 323.6 H906.1999999999999 L902.1999999999999 326.6Z" fill="#52c3f0"/><rect x="881.4" y="326.6" width="20.8" height="31" fill="#1d9ad8"/><path d="M883.3 332.6H888.5M886.5 329.40000000000003L885.3 335.8M888.8 332.6H894.0M892.0 329.40000000000003L890.8 335.8M894.3 332.6H899.5M897.5 329.40000000000003L896.3 335.8M883.3 339.6H888.5M886.5 336.40000000000003L885.3 342.8M888.8 339.6H894.0M892.0 336.40000000000003L890.8 342.8M894.3 339.6H899.5M897.5 336.40000000000003L896.3 342.8M883.3 346.6H888.5M886.5 343.40000000000003L885.3 349.8M888.8 346.6H894.0M892.0 343.40000000000003L890.8 349.8M894.3 346.6H899.5M897.5 343.40000000000003L896.3 349.8" stroke="#cfe6f4" stroke-width="0.7"/><circle cx="885.9" cy="332.6" r="1.1" fill="#f4faff"/><circle cx="891.4" cy="332.6" r="1.1" fill="#f4faff"/><circle cx="896.9" cy="332.6" r="1.1" fill="#f4faff"/><circle cx="885.9" cy="339.6" r="1.1" fill="#f4faff"/><circle cx="891.4" cy="339.6" r="1.1" fill="#f4faff"/><circle cx="896.9" cy="339.6" r="1.1" fill="#f4faff"/><circle cx="885.9" cy="346.6" r="1.1" fill="#f4faff"/><circle cx="891.4" cy="346.6" r="1.1" fill="#f4faff"/><circle cx="896.9" cy="346.6" r="1.1" fill="#f4faff"/><path d="M906.1999999999999 350.6 L906.1999999999999 357.6 L899.1999999999999 357.6Z" fill="#1e8ef0" stroke="#0a3a8a" stroke-width="0.5"/><path d="M952 467.3 L955 464.3 H976.8 V496.3 L973.8 498.3 H952Z" fill="#0c6fa8"/><path d="M952 467.3 L955 464.3 H976.8 L972.8 467.3Z" fill="#52c3f0"/><rect x="952" y="467.3" width="20.8" height="31" fill="#1d9ad8"/><path d="M953.9 473.3H959.1M957.1 470.1L955.9 476.5M959.4 473.3H964.6M962.6 470.1L961.4 476.5M964.9 473.3H970.1M968.1 470.1L966.9 476.5M953.9 480.3H959.1M957.1 477.1L955.9 483.5M959.4 480.3H964.6M962.6 477.1L961.4 483.5M964.9 480.3H970.1M968.1 477.1L966.9 483.5M953.9 487.3H959.1M957.1 484.1L955.9 490.5M959.4 487.3H964.6M962.6 484.1L961.4 490.5M964.9 487.3H970.1M968.1 484.1L966.9 490.5" stroke="#cfe6f4" stroke-width="0.7"/><circle cx="956.5" cy="473.3" r="1.1" fill="#f4faff"/><circle cx="962.0" cy="473.3" r="1.1" fill="#f4faff"/><circle cx="967.5" cy="473.3" r="1.1" fill="#f4faff"/><circle cx="956.5" cy="480.3" r="1.1" fill="#f4faff"/><circle cx="962.0" cy="480.3" r="1.1" fill="#f4faff"/><circle cx="967.5" cy="480.3" r="1.1" fill="#f4faff"/><circle cx="956.5" cy="487.3" r="1.1" fill="#f4faff"/><circle cx="962.0" cy="487.3" r="1.1" fill="#f4faff"/><circle cx="967.5" cy="487.3" r="1.1" fill="#f4faff"/><path d="M976.8 491.3 L976.8 498.3 L969.8 498.3Z" fill="#1e8ef0" stroke="#0a3a8a" stroke-width="0.5"/><path d="M302.6 430.5 L310.6 424.5 H352.1 V460.0 L344.1 466.0 H302.6Z" fill="#0b6aa5"/><path d="M302.6 430.5 L310.6 424.5 H352.1 L344.1 430.5Z" fill="#4ec0ee"/><rect x="302.6" y="430.5" width="41.5" height="35.5" fill="#239dd8"/><circle cx="323.35" cy="448.25" r="8" fill="none" stroke="#d8c070" stroke-width="1.3"/><path d="M318.35 454.25 L313.35 462.25 M323.35 448.25 L333.35 442.25 M323.35 448.25 L333.35 456.25" stroke="#d8c070" stroke-width="1.3"/><rect x="336.1" y="434.5" width="5" height="10" rx="1" fill="none" stroke="#8ad0f0" stroke-width="0.8"/><rect x="336.1" y="448.5" width="5" height="10" rx="1" fill="none" stroke="#8ad0f0" stroke-width="0.8"/><ellipse cx="308.6" cy="446.25" rx="3.5" ry="5" fill="none" stroke="#8ad0f0" stroke-width="0.8"/><path d="M352.1 458.0 L352.1 466.0 L344.1 466.0Z" fill="#1e8ef0" stroke="#0a3a8a" stroke-width="0.5"/><path d="M302.3 659.2 L310.3 653.2 H351.8 V688.2 L343.8 694.2 H302.3Z" fill="#0b6aa5"/><path d="M302.3 659.2 L310.3 653.2 H351.8 L343.8 659.2Z" fill="#4ec0ee"/><rect x="302.3" y="659.2" width="41.5" height="35" fill="#239dd8"/><circle cx="323.05" cy="676.7" r="8" fill="none" stroke="#d8c070" stroke-width="1.3"/><path d="M318.05 682.7 L313.05 690.7 M323.05 676.7 L333.05 670.7 M323.05 676.7 L333.05 684.7" stroke="#d8c070" stroke-width="1.3"/><rect x="335.8" y="663.2" width="5" height="10" rx="1" fill="none" stroke="#8ad0f0" stroke-width="0.8"/><rect x="335.8" y="677.2" width="5" height="10" rx="1" fill="none" stroke="#8ad0f0" stroke-width="0.8"/><ellipse cx="308.3" cy="674.7" rx="3.5" ry="5" fill="none" stroke="#8ad0f0" stroke-width="0.8"/><path d="M351.8 686.2 L351.8 694.2 L343.8 694.2Z" fill="#1e8ef0" stroke="#0a3a8a" stroke-width="0.5"/><path d="M300.5 490 L308.5 484 H342.0 V518 L334.0 524 H300.5Z" fill="#0b6aa5"/><path d="M300.5 490 L308.5 484 H342.0 L334.0 490Z" fill="#4ec0ee"/><rect x="300.5" y="490" width="33.5" height="34" fill="#239dd8"/><line x1="323.2" y1="507.0" x2="329.2" y2="507.0" stroke="#f2e2a8" stroke-width="2"/><path d="M333.8 507.0 L329.2 510.2 L329.2 503.8Z" fill="#f2e2a8"/><line x1="321.5" y1="511.2" x2="325.7" y2="515.5" stroke="#f2e2a8" stroke-width="2"/><path d="M328.9 518.7 L323.5 517.7 L328.0 513.2Z" fill="#f2e2a8"/><line x1="317.2" y1="513.0" x2="317.2" y2="519.0" stroke="#f2e2a8" stroke-width="2"/><path d="M317.2 523.5 L314.1 519.0 L320.4 519.0Z" fill="#f2e2a8"/><line x1="313.0" y1="511.2" x2="308.8" y2="515.5" stroke="#f2e2a8" stroke-width="2"/><path d="M305.6 518.7 L306.5 513.2 L311.0 517.7Z" fill="#f2e2a8"/><line x1="311.2" y1="507.0" x2="305.2" y2="507.0" stroke="#f2e2a8" stroke-width="2"/><path d="M300.8 507.0 L305.2 503.8 L305.2 510.2Z" fill="#f2e2a8"/><line x1="313.0" y1="502.8" x2="308.8" y2="498.5" stroke="#f2e2a8" stroke-width="2"/><path d="M305.6 495.3 L311.0 496.3 L306.5 500.8Z" fill="#f2e2a8"/><line x1="317.2" y1="501.0" x2="317.2" y2="495.0" stroke="#f2e2a8" stroke-width="2"/><path d="M317.2 490.5 L320.4 495.0 L314.1 495.0Z" fill="#f2e2a8"/><line x1="321.5" y1="502.8" x2="325.7" y2="498.5" stroke="#f2e2a8" stroke-width="2"/><path d="M328.9 495.3 L328.0 500.8 L323.5 496.3Z" fill="#f2e2a8"/><circle cx="317.25" cy="507.0" r="7.5" fill="#e24466" stroke="#c02848" stroke-width="0.8"/><rect x="313.75" y="506.5" width="7" height="5.5" fill="#f0e0a0"/><path d="M315.05 506.5 V504.2 A2.2 2.2 0 0 1 319.45 504.2 V506.5" fill="none" stroke="#f0e0a0" stroke-width="1.1"/><path d="M342.0 516 L342.0 524 L334.0 524Z" fill="#1e8ef0" stroke="#0a3a8a" stroke-width="0.5"/><path d="M418 658.8 L426 652.8 H461 V689.4 L453 695.4 H418Z" fill="#0b6aa5"/><path d="M418 658.8 L426 652.8 H461 L453 658.8Z" fill="#4ec0ee"/><rect x="418" y="658.8" width="35" height="36.6" fill="#239dd8"/><line x1="441.5" y1="677.1" x2="447.5" y2="677.1" stroke="#f2e2a8" stroke-width="2"/><path d="M452.0 677.1 L447.5 680.3 L447.5 673.9Z" fill="#f2e2a8"/><line x1="439.7" y1="681.3" x2="444.0" y2="685.6" stroke="#f2e2a8" stroke-width="2"/><path d="M447.2 688.8 L441.7 687.8 L446.2 683.3Z" fill="#f2e2a8"/><line x1="435.5" y1="683.1" x2="435.5" y2="689.1" stroke="#f2e2a8" stroke-width="2"/><path d="M435.5 693.6 L432.3 689.1 L438.7 689.1Z" fill="#f2e2a8"/><line x1="431.3" y1="681.3" x2="427.0" y2="685.6" stroke="#f2e2a8" stroke-width="2"/><path d="M423.8 688.8 L424.8 683.3 L429.3 687.8Z" fill="#f2e2a8"/><line x1="429.5" y1="677.1" x2="423.5" y2="677.1" stroke="#f2e2a8" stroke-width="2"/><path d="M419.0 677.1 L423.5 673.9 L423.5 680.3Z" fill="#f2e2a8"/><line x1="431.3" y1="672.9" x2="427.0" y2="668.6" stroke="#f2e2a8" stroke-width="2"/><path d="M423.8 665.4 L429.3 666.4 L424.8 670.9Z" fill="#f2e2a8"/><line x1="435.5" y1="671.1" x2="435.5" y2="665.1" stroke="#f2e2a8" stroke-width="2"/><path d="M435.5 660.6 L438.7 665.1 L432.3 665.1Z" fill="#f2e2a8"/><line x1="439.7" y1="672.9" x2="444.0" y2="668.6" stroke="#f2e2a8" stroke-width="2"/><path d="M447.2 665.4 L446.2 670.9 L441.7 666.4Z" fill="#f2e2a8"/><circle cx="435.5" cy="677.0999999999999" r="7.5" fill="#e24466" stroke="#c02848" stroke-width="0.8"/><rect x="432.0" y="676.5999999999999" width="7" height="5.5" fill="#f0e0a0"/><path d="M433.3 676.5999999999999 V674.3 A2.2 2.2 0 0 1 437.7 674.3 V676.5999999999999" fill="none" stroke="#f0e0a0" stroke-width="1.1"/><path d="M461 687.4 L461 695.4 L453 695.4Z" fill="#1e8ef0" stroke="#0a3a8a" stroke-width="0.5"/><rect x="44.2" y="576.2" width="41.8" height="73" rx="7" fill="url(#srv)" stroke="#5a656b" stroke-width="0.8"/><rect x="49.2" y="582.5" width="31.3" height="10.5" rx="4" fill="#262a2d"/><rect x="72" y="585.5" width="6" height="4" rx="1" fill="#9aa4aa"/><rect x="49.2" y="597" width="31.3" height="10.5" rx="4" fill="#262a2d"/><rect x="72" y="600" width="6" height="4" rx="1" fill="#9aa4aa"/><rect x="49.2" y="611.7" width="31.3" height="10.5" rx="4" fill="#262a2d"/><rect x="72" y="614.7" width="6" height="4" rx="1" fill="#9aa4aa"/><rect x="49.2" y="626" width="31.3" height="10.5" rx="4" fill="#262a2d"/><rect x="72" y="629" width="6" height="4" rx="1" fill="#9aa4aa"/><path d="M62 640 h8 l-1.5 4 h-5z" fill="#222"/><rect x="90.2" y="596" width="27.5" height="23.5" rx="3" fill="#8d989e" stroke="#5f6a70" stroke-width="0.6"/><rect x="93" y="598.5" width="22" height="14" rx="1.5" fill="url(#scr)"/><circle cx="104" cy="615.5" r="1.2" fill="#9ae040"/><rect x="97" y="618.5" width="14" height="2" fill="#333"/><rect x="90.2" y="625.3" width="27.5" height="23.5" rx="3" fill="#8d989e" stroke="#5f6a70" stroke-width="0.6"/><rect x="93" y="627.8" width="22" height="14" rx="1.5" fill="url(#scr)"/><circle cx="104" cy="644.8" r="1.2" fill="#9ae040"/><rect x="97" y="647.8" width="14" height="2" fill="#333"/><rect x="477.5" y="476.5" width="50" height="54" fill="none" stroke="#b8f040" stroke-width="1"/><rect x="478" y="477" width="50" height="53.5" fill="#e07f20"/><rect x="486" y="477" width="29" height="5.8" fill="#ff0000"/><rect x="486" y="524.4" width="29" height="5.8" fill="#ff0000"/><rect x="478" y="485.5" width="6.2" height="36" fill="#ff0000"/><rect x="470" y="469" width="15.5" height="15.5" fill="#d8f8a0" fill-opacity="0.55" stroke="#b8f040" stroke-width="2"/><rect x="470" y="522.5" width="15.5" height="15.5" fill="#d8f8a0" fill-opacity="0.55" stroke="#b8f040" stroke-width="2"/><rect x="515" y="469" width="15.5" height="15.5" fill="#d8f8a0" fill-opacity="0.55" stroke="#b8f040" stroke-width="2"/><rect x="515" y="522.5" width="15.5" height="15.5" fill="#d8f8a0" fill-opacity="0.55" stroke="#b8f040" stroke-width="2"/><circle cx="500.8" cy="414.6" r="7.3" fill="#d8f598" stroke="#bef548" stroke-width="2.2"/><path d="M967 636 Q978 640 980 648 Q978 656 967 660Z" fill="#e01010"/><text x="95.4" y="361" font-size="6.6" fill="#84841a"  stroke="#84841a" stroke-width="0.18">10.10.1.34</text><text x="104.7" y="370.4" font-size="6.6" fill="#000"  stroke="#000" stroke-width="0.18">Ba-Ed-1R204.0746</text><rect x="53.5" y="402" width="41.099999999999994" height="7.5" fill="#ffff00"/><text x="74.05" y="408.3" font-size="6.8" fill="#ff3a00" text-anchor="middle" stroke="#ff3a00" stroke-width="0.15">4Ka7Bm39IB</text><text x="52.8" y="432.6" font-size="6.6" fill="#000" text-anchor="end" stroke="#000" stroke-width="0.18">Ba-Ed-1R204.0637</text><text x="95" y="432.6" font-size="6.6" fill="#84841a"  stroke="#84841a" stroke-width="0.18">10.10.1.25</text><rect x="53.4" y="460.3" width="38.6" height="7.199999999999989" fill="#ffff00"/><text x="72.7" y="466.3" font-size="6.8" fill="#ff3a00" text-anchor="middle" stroke="#ff3a00" stroke-width="0.15">5Pr7Bm39IB</text><text x="52.8" y="484.5" font-size="6.6" fill="#000" text-anchor="end" stroke="#000" stroke-width="0.18">Ba-Ed-1R204.0953</text><text x="95" y="484.5" font-size="6.6" fill="#84841a"  stroke="#84841a" stroke-width="0.18">10.10.1.41</text><rect x="53.4" y="512.2" width="38.6" height="7.2999999999999545" fill="#ffff00"/><text x="72.7" y="518.3" font-size="6.8" fill="#ff3a00" text-anchor="middle" stroke="#ff3a00" stroke-width="0.15">1Ka7Bm39IB</text><text x="56" y="571" font-size="6.6" fill="#000"  stroke="#000" stroke-width="0.18">Server</text><text x="265.7" y="438.3" font-size="6.7" fill="#333"  stroke="#333" stroke-width="0.18">Dev10030</text><text x="204.2" y="466.9" font-size="10" fill="#2a9a5a" textLength="47" lengthAdjust="spacingAndGlyphs" stroke="#2a9a5a" stroke-width="0.25">10.10.1.30</text><line x1="204" y1="467.8" x2="251.5" y2="467.8" stroke="#2e9a5e" stroke-width="0.8"/><text x="301.6" y="420.7" font-size="6.7" fill="#333"  stroke="#333" stroke-width="0.18">Ba-Ed-1R204.0638</text><text x="359" y="439.4" font-size="6.7" fill="#333"  stroke="#333" stroke-width="0.18">Dev10005</text><text x="307.8" y="471.5" font-size="6.6" fill="#a8401e"  stroke="#a8401e" stroke-width="0.18">10.10.1.26</text><text x="346.5" y="516.9" font-size="6.7" fill="#1a1a6a" font-style="italic" stroke="#1a1a6a" stroke-width="0.18">10.10.1.6</text><text x="272" y="554.6" font-size="6.7" fill="#000"  stroke="#000" stroke-width="0.18">Dev10361</text><text x="258" y="566.6" font-size="8.2" fill="#8b1a8b" font-style="italic" stroke="#8b1a8b" stroke-width="0.18">10.10.1.187</text><text x="13.5" y="722.4" font-size="6.6" fill="#000"  stroke="#000" stroke-width="0.18">Ch-Go-1R173.01369</text><text x="110.8" y="722.4" font-size="6.6" fill="#84841a"  stroke="#84841a" stroke-width="0.18">10.10.1.182</text><rect x="69" y="749" width="39" height="7" fill="#ffff00"/><text x="88.5" y="754.8" font-size="6.8" fill="#ff3a00" text-anchor="middle" stroke="#ff3a00" stroke-width="0.15">2Ka1Ch41IB</text><text x="120.3" y="812.2" font-size="6.6" fill="#000"  stroke="#000" stroke-width="0.18">Ch-Go-1R171.07353</text><text x="217.6" y="812.2" font-size="6.6" fill="#84841a"  stroke="#84841a" stroke-width="0.18">10.10.1.166</text><rect x="175.7" y="838.6" width="38.60000000000002" height="7.600000000000023" fill="#ffff00"/><text x="195.0" y="845.0" font-size="6.8" fill="#ff3a00" text-anchor="middle" stroke="#ff3a00" stroke-width="0.15">6Sy1Ch41IB</text><text x="307" y="700.8" font-size="6.6" fill="#a8401e"  stroke="#a8401e" stroke-width="0.18">10.10.1.183</text><text x="409" y="650" font-size="6.7" fill="#000"  stroke="#000" stroke-width="0.18">Ba-Ed-1R204.0531</text><text x="468" y="673.8" font-size="6.7" fill="#333"  stroke="#333" stroke-width="0.18">Dev10019</text><text x="397.8" y="728.5" font-size="6.7" fill="#000"  stroke="#000" stroke-width="0.18">Dev10054</text><text x="503" y="725" font-size="6.7" fill="#000"  stroke="#000" stroke-width="0.18">Dev1</text><text x="503" y="738.5" font-size="10" fill="#2a9a5a" letter-spacing="0.9" stroke="#2a9a5a" stroke-width="0.25">10.1</text><text x="352" y="842.6" font-size="6.6" fill="#84841a"  stroke="#84841a" stroke-width="0.18">10.10.1.162</text><text x="432.7" y="842" font-size="6.6" fill="#84841a"  stroke="#84841a" stroke-width="0.18">10.10.1.52</text><text x="512" y="842" font-size="6.6" fill="#84841a"  stroke="#84841a" stroke-width="0.18">192.168.0.2</text><text x="816.9" y="334.2" font-size="6.6" fill="#000"  stroke="#000" stroke-width="0.18">Ba-Ed-1R204.1064</text><text x="914" y="339.4" font-size="12.5" fill="#8c8c2c" >10.10.1.52</text><rect x="872" y="361" width="40" height="7.5" fill="#ffff00"/><text x="892.0" y="367.3" font-size="6.8" fill="#ff3a00" text-anchor="middle" stroke="#ff3a00" stroke-width="0.15">2Pr7Bm39IB</text><text x="781.8" y="446.7" font-size="6.7" fill="#000"  stroke="#000" stroke-width="0.18">Dev10361</text><text x="781.8" y="454.2" font-size="6.7" fill="#1a2a9a" font-style="italic" stroke="#1a2a9a" stroke-width="0.18">10.10.1.157</text><text x="827.2" y="502.9" font-size="6.7" fill="#000"  stroke="#000" stroke-width="0.18">Cisco CISCO3825</text><text x="825.7" y="511" font-size="6.7" fill="#1a2a9a" font-style="italic" stroke="#1a2a9a" stroke-width="0.18">10.10.10.199</text><text x="827" y="559" font-size="6.7" fill="#000"  stroke="#000" stroke-width="0.18">Cisco CISCO3825</text><text x="887" y="475.7" font-size="6.6" fill="#000"  stroke="#000" stroke-width="0.18">Ba-Ed-1R204.1167</text><text x="983.6" y="475.7" font-size="6.6" fill="#84841a"  stroke="#84841a" stroke-width="0.18">10.10.1.55</text><rect x="942.5" y="502.2" width="38.5" height="7.300000000000011" fill="#ffff00"/><text x="961.75" y="508.3" font-size="6.8" fill="#ff3a00" text-anchor="middle" stroke="#ff3a00" stroke-width="0.15">5Pr7Bm39IB</text><text x="969" y="626" font-size="6.6" fill="#000"  stroke="#000" stroke-width="0.18">phone</text></svg>
<div class="abs" style="left:0;top:0;width:1110px;height:1px;background:#dcdcdc"></div>
<div class="abs" style="left:0;top:1px;width:1110px;height:46px;background:#474747"></div>
<div class="t" style="left:0px;top:23.30px;font-size:15px;color:#fff;font-weight:normal;letter-spacing:0.05px">Import &amp; Export</div>
<div class="t" style="left:130px;top:23.30px;font-size:15px;color:#fff;font-weight:normal;">Maps</div>
<div class="t" style="left:192px;top:23.30px;font-size:15px;color:#fff;font-weight:normal;">Help</div>
<div class="abs" style="left:248px;top:19px;width:109px;height:23px;background:#353535;border-radius:5px"></div>
<div class="t" style="left:254px;top:23.30px;font-size:15px;color:#fff;font-weight:normal;">Feature Finder</div>
<svg style="left:374px;top:22px" width="15" height="16"><path d="M7.5 0.5 L14.5 7.5 L0.5 7.5Z" fill="#fff"/><rect x="0.5" y="8.5" width="14" height="3" fill="#fff"/><rect x="0.5" y="12.8" width="14" height="3" fill="#fff"/></svg>
<svg style="left:1016px;top:13px" width="26" height="26" viewBox="0 0 26 26">
<circle cx="12.7" cy="12.6" r="10.3" fill="none" stroke="#fff" stroke-width="2.2"/>
<ellipse cx="12.7" cy="12.6" rx="4.3" ry="10.3" fill="none" stroke="#fff" stroke-width="2"/>
<line x1="2.5" y1="9" x2="23" y2="9" stroke="#fff" stroke-width="2"/>
<line x1="2.5" y1="16.3" x2="23" y2="16.3" stroke="#fff" stroke-width="2"/>
<line x1="12.7" y1="2.5" x2="12.7" y2="23" stroke="#fff" stroke-width="2"/>
</svg>
<svg style="left:1052px;top:13px" width="26" height="26" viewBox="0 0 26 26">
<circle cx="12" cy="12.8" r="8.5" fill="none" stroke="#fff" stroke-width="6"/>
<line x1="12" y1="12.8" x2="6" y2="1" stroke="#474747" stroke-width="1.3"/>
<line x1="12" y1="12.8" x2="18.5" y2="2" stroke="#474747" stroke-width="1.3"/>
<line x1="12" y1="12.8" x2="0" y2="10.5" stroke="#474747" stroke-width="1.3"/>
</svg>
<svg style="left:1085px;top:13px" width="30" height="26" viewBox="0 0 30 26">
<rect x="2.5" y="3.5" width="20" height="19" fill="none" stroke="#fff" stroke-width="3"/>
<path d="M6 10 L12 17 L25 2" fill="none" stroke="#474747" stroke-width="6"/>
<path d="M7 11 L12.5 16.5 L26 3" fill="none" stroke="#fff" stroke-width="3.4"/>
</svg>
<div class="abs" style="left:0;top:47px;width:1110px;height:74px;background:#636363"></div>
<div class="abs" style="left:107px;top:47px;width:1px;height:74px;background:#555"></div>
<svg style="left:-4px;top:56px" width="14" height="22" viewBox="0 0 14 22">
<path d="M-8 26 L3.2 10.2 L7.6 14.6 L-3.6 30Z" fill="#fff"/>
<path d="M4.4 9 L7.2 6 Q9.3 4 11.3 6 L12 6.7 Q14 8.7 12 10.7 L9 13.6Z" fill="#fff"/>
</svg>
<div class="t" style="left:-6.5px;top:98.50px;font-size:13px;color:#fff;font-weight:normal;">ng</div>
<svg style="left:11px;top:104px" width="11" height="6"><path d="M0.5 0 L10 0 L5.25 5.5Z" fill="#fff"/></svg>
<svg style="left:50px;top:54px" width="36" height="36" viewBox="0 0 36 36">
<rect x="2.3" y="2.2" width="31" height="31.5" rx="3" fill="none" stroke="#fff" stroke-width="2.3"/>
<circle cx="17.4" cy="17.8" r="7.3" fill="#1a8fd0" stroke="#fff" stroke-width="2.2"/>
<circle cx="6" cy="6" r="1.1" fill="#fff"/>
<rect x="24.3" y="3" width="1.6" height="6" fill="#fff"/><rect x="27.8" y="3" width="1.6" height="6" fill="#fff"/>
<path d="M13.5 16.5 Q14 14 16.5 13.5" fill="none" stroke="#fff" stroke-width="0.8" opacity="0.8"/>
</svg>
<div class="t" style="left:48px;top:98.50px;font-size:13px;color:#fff;font-weight:normal;">Picture</div>
<svg style="left:131px;top:54px" width="36" height="36" viewBox="0 0 36 36">
<rect x="2" y="2.2" width="32" height="32" rx="3" fill="none" stroke="#999" stroke-width="2.2"/>
<path d="M11 25 L24 12 Q26.5 9.5 28.5 11.5 Q30.5 13.5 28 16 L16.5 27.5 Q13 31 9.5 27.5 Q6 24 9.5 20.5 L20 10" fill="none" stroke="#999" stroke-width="1.8"/>
<path d="M14 24.5 L25 13.5" fill="none" stroke="#999" stroke-width="1.6"/>
</svg>
<div class="t" style="left:116px;top:99.00px;font-size:13px;color:#fff;font-weight:normal;">Attachment</div>
<svg style="left:206px;top:54px" width="36" height="36" viewBox="0 0 36 36">
<rect x="0.6" y="0.8" width="33.6" height="34.2" rx="4" fill="#8bc45a"/>
<circle cx="8.6" cy="9.5" r="1.8" fill="#636363"/><rect x="13" y="7.6" width="14" height="3.8" rx="1.9" fill="#636363"/>
<circle cx="8.6" cy="17.8" r="1.8" fill="#636363"/><rect x="13" y="15.9" width="14" height="3.8" rx="1.9" fill="#636363"/>
<circle cx="8.6" cy="26" r="1.8" fill="#636363"/><rect x="13" y="24.1" width="14" height="3.8" rx="1.9" fill="#636363"/>
</svg>
<div class="t" style="left:211px;top:99.00px;font-size:13px;color:#fff;font-weight:normal;">Task</div>
<div class="abs" style="left:0;top:121px;width:1110px;height:95px;background:#474747"></div>
<svg style="left:0;top:121px" width="360" height="32"><path d="M0 0 H187 L187 32 H0Z" fill="#333"/><path d="M172.5 0 H339.5 L355 16 L339.5 32 H172.5 L187 16Z" fill="#c0192f"/></svg>
<div class="t" style="left:0.5px;top:129.90px;font-size:14.3px;color:#fff;font-weight:bold;-webkit-text-stroke:0">Top Level</div>
<div class="t" style="left:101.5px;top:129.90px;font-size:14.3px;color:#fff;font-weight:bold;-webkit-text-stroke:0">Networks</div>
<div class="t" style="left:203.5px;top:129.56px;font-size:14.7px;color:#fff;font-weight:bold;-webkit-text-stroke:0">Layer 3 - IP / MPLS</div>
<div class="abs" style="left:0;top:166px;width:40px;height:31px;background:#999"></div>
<div class="t" style="left:14px;top:173.30px;font-size:15px;color:#222;font-weight:normal;-webkit-text-stroke:0">1</div>
<div class="abs" style="left:1073px;top:166px;width:40px;height:31px;background:#999"></div>
<div class="t" style="left:1091.5px;top:173.30px;font-size:15px;color:#222;font-weight:normal;-webkit-text-stroke:0">0</div>
<div class="abs" style="left:518px;top:1px;width:208px;height:785px;background:#474747;border:1px solid #0c0c0c;border-radius:6px;box-shadow:4px 3px 7px rgba(0,0,0,0.6)"></div>
<svg style="left:0;top:0" width="1110" height="20"><path d="M529.0 10.8 L531.3 8.2 M529.0 14.6 L531.3 12" stroke="#767676" stroke-width="1.15"/><path d="M532.8 10.8 L535.1 8.2 M532.8 14.6 L535.1 12" stroke="#767676" stroke-width="1.15"/><path d="M536.6 10.8 L538.9 8.2 M536.6 14.6 L538.9 12" stroke="#767676" stroke-width="1.15"/><path d="M540.4 10.8 L542.7 8.2 M540.4 14.6 L542.7 12" stroke="#767676" stroke-width="1.15"/><path d="M544.2 10.8 L546.5 8.2 M544.2 14.6 L546.5 12" stroke="#767676" stroke-width="1.15"/><path d="M548.0 10.8 L550.3 8.2 M548.0 14.6 L550.3 12" stroke="#767676" stroke-width="1.15"/><path d="M551.8 10.8 L554.1 8.2 M551.8 14.6 L554.1 12" stroke="#767676" stroke-width="1.15"/><path d="M555.6 10.8 L557.9 8.2 M555.6 14.6 L557.9 12" stroke="#767676" stroke-width="1.15"/><path d="M559.4 10.8 L561.7 8.2 M559.4 14.6 L561.7 12" stroke="#767676" stroke-width="1.15"/><path d="M563.2 10.8 L565.5 8.2 M563.2 14.6 L565.5 12" stroke="#767676" stroke-width="1.15"/><path d="M567.0 10.8 L569.3 8.2 M567.0 14.6 L569.3 12" stroke="#767676" stroke-width="1.15"/><path d="M570.8 10.8 L573.1 8.2 M570.8 14.6 L573.1 12" stroke="#767676" stroke-width="1.15"/><path d="M574.6 10.8 L576.9 8.2 M574.6 14.6 L576.9 12" stroke="#767676" stroke-width="1.15"/><path d="M578.4 10.8 L580.7 8.2 M578.4 14.6 L580.7 12" stroke="#767676" stroke-width="1.15"/><path d="M582.2 10.8 L584.5 8.2 M582.2 14.6 L584.5 12" stroke="#767676" stroke-width="1.15"/><path d="M586.0 10.8 L588.3 8.2 M586.0 14.6 L588.3 12" stroke="#767676" stroke-width="1.15"/><path d="M589.8 10.8 L592.1 8.2 M589.8 14.6 L592.1 12" stroke="#767676" stroke-width="1.15"/><path d="M593.6 10.8 L595.9 8.2 M593.6 14.6 L595.9 12" stroke="#767676" stroke-width="1.15"/><path d="M597.4 10.8 L599.7 8.2 M597.4 14.6 L599.7 12" stroke="#767676" stroke-width="1.15"/><path d="M601.2 10.8 L603.5 8.2 M601.2 14.6 L603.5 12" stroke="#767676" stroke-width="1.15"/><path d="M605.0 10.8 L607.3 8.2 M605.0 14.6 L607.3 12" stroke="#767676" stroke-width="1.15"/><path d="M608.8 10.8 L611.1 8.2 M608.8 14.6 L611.1 12" stroke="#767676" stroke-width="1.15"/><path d="M612.6 10.8 L614.9 8.2 M612.6 14.6 L614.9 12" stroke="#767676" stroke-width="1.15"/><path d="M616.4 10.8 L618.7 8.2 M616.4 14.6 L618.7 12" stroke="#767676" stroke-width="1.15"/><path d="M620.2 10.8 L622.5 8.2 M620.2 14.6 L622.5 12" stroke="#767676" stroke-width="1.15"/><path d="M624.0 10.8 L626.3 8.2 M624.0 14.6 L626.3 12" stroke="#767676" stroke-width="1.15"/><path d="M627.8 10.8 L630.1 8.2 M627.8 14.6 L630.1 12" stroke="#767676" stroke-width="1.15"/><path d="M631.6 10.8 L633.9 8.2 M631.6 14.6 L633.9 12" stroke="#767676" stroke-width="1.15"/><path d="M635.4 10.8 L637.7 8.2 M635.4 14.6 L637.7 12" stroke="#767676" stroke-width="1.15"/><path d="M639.2 10.8 L641.5 8.2 M639.2 14.6 L641.5 12" stroke="#767676" stroke-width="1.15"/><path d="M643.0 10.8 L645.3 8.2 M643.0 14.6 L645.3 12" stroke="#767676" stroke-width="1.15"/><path d="M646.8 10.8 L649.1 8.2 M646.8 14.6 L649.1 12" stroke="#767676" stroke-width="1.15"/><path d="M650.6 10.8 L652.9 8.2 M650.6 14.6 L652.9 12" stroke="#767676" stroke-width="1.15"/><path d="M654.4 10.8 L656.7 8.2 M654.4 14.6 L656.7 12" stroke="#767676" stroke-width="1.15"/><path d="M658.2 10.8 L660.5 8.2 M658.2 14.6 L660.5 12" stroke="#767676" stroke-width="1.15"/><path d="M662.0 10.8 L664.3 8.2 M662.0 14.6 L664.3 12" stroke="#767676" stroke-width="1.15"/><path d="M665.8 10.8 L668.1 8.2 M665.8 14.6 L668.1 12" stroke="#767676" stroke-width="1.15"/><path d="M669.6 10.8 L671.9 8.2 M669.6 14.6 L671.9 12" stroke="#767676" stroke-width="1.15"/><path d="M673.4 10.8 L675.7 8.2 M673.4 14.6 L675.7 12" stroke="#767676" stroke-width="1.15"/><path d="M677.2 10.8 L679.5 8.2 M677.2 14.6 L679.5 12" stroke="#767676" stroke-width="1.15"/><path d="M681.0 10.8 L683.3 8.2 M681.0 14.6 L683.3 12" stroke="#767676" stroke-width="1.15"/><path d="M684.8 10.8 L687.1 8.2 M684.8 14.6 L687.1 12" stroke="#767676" stroke-width="1.15"/><path d="M688.6 10.8 L690.9 8.2 M688.6 14.6 L690.9 12" stroke="#767676" stroke-width="1.15"/><path d="M692.4 10.8 L694.7 8.2 M692.4 14.6 L694.7 12" stroke="#767676" stroke-width="1.15"/><path d="M696.2 10.8 L698.5 8.2 M696.2 14.6 L698.5 12" stroke="#767676" stroke-width="1.15"/><path d="M700.0 10.8 L702.3 8.2 M700.0 14.6 L702.3 12" stroke="#767676" stroke-width="1.15"/><path d="M703.8 10.8 L706.1 8.2 M703.8 14.6 L706.1 12" stroke="#767676" stroke-width="1.15"/><path d="M707.6 10.8 L709.9 8.2 M707.6 14.6 L709.9 12" stroke="#767676" stroke-width="1.15"/><path d="M711.4 10.8 L713.7 8.2 M711.4 14.6 L713.7 12" stroke="#767676" stroke-width="1.15"/></svg>
<div class="abs" style="left:524px;top:48.8px;width:195px;height:1px;background:#373737"></div>
<div class="abs" style="left:524px;top:84.1px;width:195px;height:1px;background:#373737"></div>
<div class="abs" style="left:524px;top:205.2px;width:195px;height:1px;background:#373737"></div>
<div class="abs" style="left:524px;top:240.0px;width:195px;height:1px;background:#373737"></div>
<div class="abs" style="left:524px;top:275.1px;width:195px;height:1px;background:#373737"></div>
<div class="abs" style="left:524px;top:309.8px;width:195px;height:1px;background:#373737"></div>
<div class="abs" style="left:524px;top:430.9px;width:195px;height:1px;background:#373737"></div>
<div class="abs" style="left:524px;top:495.0px;width:195px;height:1px;background:#373737"></div>
<div class="abs" style="left:524px;top:558.9px;width:195px;height:1px;background:#373737"></div>
<div class="abs" style="left:524px;top:594.0px;width:195px;height:1px;background:#373737"></div>
<div class="abs" style="left:524px;top:686.1px;width:195px;height:1px;background:#373737"></div>
<div class="abs" style="left:524px;top:750.2px;width:195px;height:1px;background:#373737"></div>
<div class="abs" style="left:522px;top:562px;width:200px;height:29px;background:#be1a2e;border-radius:4px"></div>
<div class="t" style="left:552px;top:22.95px;font-size:14px;color:#eeeeee;font-weight:normal;letter-spacing:-0.12px">Delete</div>
<svg style="left:524px;top:22.0px" width="22" height="22" viewBox="0 0 22 22"><rect x="8" y="0" width="6" height="1.3" rx="0.6" fill="#8bc45a"/><rect x="1.6" y="2.6" width="17.4" height="3" rx="0.8" fill="none" stroke="#8bc45a" stroke-width="1.3"/><path d="M3.3 6.5 V19.2 H17.3 V6.5" fill="none" stroke="#8bc45a" stroke-width="1.3"/><path d="M7.3 7.5V16.5M10.3 7.5V16.5M13.3 7.5V16.5" stroke="#8bc45a" stroke-width="1.3"/></svg>
<div class="t" style="left:552px;top:58.25px;font-size:14px;color:#eeeeee;font-weight:normal;letter-spacing:-0.12px">Connections</div>
<svg style="left:524px;top:57.3px" width="22" height="22" viewBox="0 0 22 22"><path d="M17 3.5 H5.5 Q1.5 3.5 1.5 7.3 Q1.5 11 5.5 11 H15.5 Q19.5 11 19.5 14.7 Q19.5 18.5 15.5 18.5 H5" fill="none" stroke="#fff" stroke-width="2.4"/><rect x="14.5" y="1.3" width="4.5" height="4.5" rx="1" fill="#fff"/><rect x="2.5" y="16.3" width="4.5" height="4.5" rx="1" fill="#fff"/><path d="M19 3.5H21M0 18.5H2.5" stroke="#fff" stroke-width="1.3"/></svg>
<svg style="left:711px;top:60.1px" width="8" height="12"><path d="M0.8 0.8 L6 5.5 L0.8 10.2Z" fill="#fff"/></svg>
<div class="t" style="left:552px;top:93.15px;font-size:14px;color:#eeeeee;font-weight:normal;letter-spacing:-0.12px">Cut</div>
<svg style="left:524px;top:91.2px" width="22" height="22" viewBox="0 0 22 22"><path d="M5.4 1.5 L7 1.5 L13 14.5 L11.6 15.2Z M14.2 1.5 L15.6 1.5 L10 15.5 L8.4 15Z" fill="#c8c8c8"/><circle cx="5.8" cy="17.6" r="2.5" fill="none" stroke="#e8101e" stroke-width="1.6"/><circle cx="14.9" cy="17.6" r="2.5" fill="none" stroke="#e8101e" stroke-width="1.6"/></svg>
<div class="t" style="left:552px;top:122.35px;font-size:14px;color:#eeeeee;font-weight:normal;letter-spacing:-0.12px">Copy / Connect to [ctrl-c]</div>
<svg style="left:524px;top:120.9px" width="22" height="22" viewBox="0 0 22 22"><rect x="1.5" y="1.2" width="12" height="13" fill="none" stroke="#1e3d8f" stroke-width="1.4"/><rect x="5.5" y="5.2" width="13" height="14" fill="#474747" stroke="#1e3d8f" stroke-width="1.4"/></svg>
<div class="t" style="left:552px;top:151.25px;font-size:14px;color:#eeeeee;font-weight:normal;letter-spacing:-0.12px">Copy +</div>
<svg style="left:524px;top:149.3px" width="22" height="22" viewBox="0 0 22 22"><rect x="1.5" y="1.2" width="12" height="13" fill="none" stroke="#fff" stroke-width="1.4"/><rect x="5.5" y="5.2" width="13" height="14" fill="#474747" stroke="#fff" stroke-width="1.4"/><path d="M12 8.8V15.6M8.6 12.2H15.4" stroke="#fff" stroke-width="1.6"/></svg>
<div class="t" style="left:552px;top:180.05px;font-size:14px;color:#eeeeee;font-weight:normal;letter-spacing:-0.12px">All of Type</div>
<svg style="left:524px;top:177.1px" width="22" height="22" viewBox="0 0 22 22"><rect x="1" y="1" width="19" height="18.8" fill="none" stroke="#1e7ee8" stroke-width="1.2" stroke-dasharray="1.3 1.3"/><path d="M5 4.5 L10.5 7.5 L5 10.5Z M10.5 8 L16 11 L10.5 14Z M5 11.5 L10.5 14.5 L5 17.5Z" fill="#e0102a"/></svg>
<div class="t" style="left:553px;top:214.15px;font-size:14px;color:#8a8a8a;font-weight:normal;letter-spacing:-0.12px">Move to This Diagram</div>
<div class="t" style="left:552px;top:249.95px;font-size:14px;color:#8a8a8a;font-weight:normal;letter-spacing:-0.12px">Apply Field Text Format</div>
<svg style="left:524px;top:247.0px" width="22" height="22" viewBox="0 0 22 22"><rect x="1.5" y="1.2" width="12" height="12" fill="none" stroke="#fff" stroke-width="1.3"/><rect x="5" y="4.6" width="12.5" height="14" fill="#474747" stroke="#fff" stroke-width="1.3"/><path d="M9.5 7.5 H14.5 M12 7.5V16 M13.8 7.5V16" stroke="#fff" stroke-width="1.2"/><circle cx="9.6" cy="9.8" r="2" fill="#fff"/><circle cx="17.5" cy="17.5" r="3" fill="#fff"/><path d="M15.9 17.5 L17.1 18.7 L19.2 16.3" stroke="#474747" stroke-width="0.9" fill="none"/></svg>
<div class="t" style="left:552px;top:285.15px;font-size:14px;color:#eeeeee;font-weight:normal;letter-spacing:-0.12px">Change Type</div>
<svg style="left:524px;top:282.2px" width="22" height="22" viewBox="0 0 22 22"><rect x="14.3" y="1.8" width="4.7" height="4.7" fill="#e0102a"/><path d="M1.5 20.3 H6.9 L4.2 15.6Z" fill="#1e7ee8"/><path d="M11 3.2 Q6 3.6 4.6 8.8" fill="none" stroke="#8bc45a" stroke-width="2.3"/><path d="M1.6 7.8 L4.5 11.6 L7.6 7.8Z" fill="#8bc45a"/><path d="M9.8 19.6 Q15.5 19 17 13.6" fill="none" stroke="#8bc45a" stroke-width="2.3"/><path d="M14 14.5 L17 10.6 L20 14.5Z" fill="#8bc45a"/></svg>
<div class="t" style="left:552px;top:319.85px;font-size:14px;color:#eeeeee;font-weight:normal;letter-spacing:-0.12px">Reorder</div>
<svg style="left:524px;top:316.9px" width="22" height="22" viewBox="0 0 22 22"><path d="M4.7 2.5V18.5" stroke="#8bc45a" stroke-width="1.5"/><path d="M1.5 5.5 L4.7 1.5 L7.9 5.5M1.5 15.5 L4.7 19.5 L7.9 15.5" fill="none" stroke="#8bc45a" stroke-width="1.5"/><rect x="9.2" y="1.3" width="12" height="4.2" rx="1.3" fill="#1e7ee8"/><rect x="9.2" y="8.3" width="12" height="4.2" rx="1.3" fill="#1e7ee8"/><rect x="9.2" y="15.3" width="12" height="4.2" rx="1.3" fill="#1e7ee8"/></svg>
<svg style="left:711px;top:321.7px" width="8" height="12"><path d="M0.8 0.8 L6 5.5 L0.8 10.2Z" fill="#fff"/></svg>
<div class="t" style="left:552px;top:348.05px;font-size:14px;color:#eeeeee;font-weight:normal;letter-spacing:-0.12px">Center</div>
<svg style="left:524px;top:345.1px" width="22" height="22" viewBox="0 0 22 22"><path d="M0.5 1.3H20.5M0.5 6.3H20.5M0.5 11.3H20.5M0.5 16.3H20.5M0.5 20.3H20.5M1.3 0.5V21M6.3 0.5V21M11.3 0.5V21M16.3 0.5V21M20.3 0.5V21" stroke="#1e6ee0" stroke-width="1.1"/><rect x="7.3" y="7.3" width="4.2" height="4.2" fill="#f5d10a"/></svg>
<svg style="left:711px;top:349.9px" width="8" height="12"><path d="M0.8 0.8 L6 5.5 L0.8 10.2Z" fill="#fff"/></svg>
<div class="t" style="left:552px;top:376.95px;font-size:14px;color:#8a8a8a;font-weight:normal;letter-spacing:-0.12px">Place</div>
<svg style="left:524px;top:374.0px" width="22" height="22" viewBox="0 0 22 22"><path d="M10.8 20.5 L4.5 11 Q2.3 7 4.8 3.6 Q7 1 10.8 1 Q14.6 1 16.8 3.6 Q19.3 7 17.1 11Z" fill="#8bc45a"/><circle cx="10.8" cy="7.5" r="2.8" fill="#fff"/></svg>
<div class="t" style="left:552px;top:405.65px;font-size:14px;color:#8a8a8a;font-weight:normal;letter-spacing:-0.12px">Measure</div>
<svg style="left:524px;top:402.7px" width="22" height="22" viewBox="0 0 22 22"><circle cx="7" cy="10.6" r="6.9" fill="#fff"/><circle cx="7" cy="10.3" r="5" fill="#f5d000"/><path d="M5.4 11.5V16M8.6 11.5V16" stroke="#fff" stroke-width="1.1"/><path d="M4 16.8 L17.5 17 L17.5 15.6 Q15 14.2 12 14.2Z" fill="#fff"/><path d="M18.6 15.8H20.2" stroke="#fff" stroke-width="0.8"/></svg>
<div class="t" style="left:552px;top:440.75px;font-size:14px;color:#eeeeee;font-weight:normal;letter-spacing:-0.12px">Set Default</div>
<svg style="left:524px;top:437.8px" width="22" height="22" viewBox="0 0 22 22"><path d="M13 2.5 H2 V19.5 H19.5 V10" fill="none" stroke="#1e7ee8" stroke-width="2"/><path d="M6 9.5 L10.5 14 L19.5 1.5" fill="none" stroke="#1e7ee8" stroke-width="2.4"/></svg>
<div class="t" style="left:552px;top:469.65px;font-size:14px;color:#eeeeee;font-weight:normal;letter-spacing:-0.12px">Reset Size</div>
<svg style="left:524px;top:466.7px" width="22" height="22" viewBox="0 0 22 22"><path d="M10.5 2 H2 V19.5 H19.5 V11" fill="none" stroke="#e0102a" stroke-width="2.2"/><path d="M8 13.5 L19 2.5 M12.5 2 H19.7 V9" fill="none" stroke="#e0102a" stroke-width="2.2"/></svg>
<div class="t" style="left:552px;top:504.95px;font-size:14px;color:#eeeeee;font-weight:normal;letter-spacing:-0.12px">Hide</div>
<svg style="left:524px;top:502.0px" width="22" height="22" viewBox="0 0 22 22"><circle cx="10.5" cy="10.8" r="9.2" fill="none" stroke="#e0102a" stroke-width="1.3"/><path d="M3.5 10.8 Q6 7 10.5 6.8 Q15 7 17.5 10.8 Q15 14.5 10.5 14.8 Q6 14.5 3.5 10.8Z" fill="#e0102a"/><circle cx="9" cy="9.3" r="1.2" fill="#474747"/></svg>
<div class="t" style="left:552px;top:532.65px;font-size:14px;color:#eeeeee;font-weight:normal;letter-spacing:-0.12px">Connected</div>
<svg style="left:524px;top:529.7px" width="22" height="22" viewBox="0 0 22 22"><path d="M10.5 10.5 L3 5.5 M10.5 10.5 L15.5 3.5 M10.5 10.5 L18.5 11 M10.5 10.5 L12.5 18.5 M10.5 10.5 L3.5 14.5" stroke="#8bc45a" stroke-width="1.2"/><circle cx="3" cy="5" r="1.8" fill="#8bc45a"/><circle cx="16" cy="2.6" r="1.8" fill="#8bc45a"/><circle cx="19" cy="11" r="1.8" fill="#8bc45a"/><circle cx="13" cy="19.3" r="1.8" fill="#8bc45a"/><circle cx="2.6" cy="15.3" r="1.8" fill="#8bc45a"/><circle cx="10.5" cy="10.5" r="3.8" fill="#1e7ee8"/></svg>
<div class="t" style="left:552px;top:567.75px;font-size:14px;color:#ffffff;font-weight:normal;letter-spacing:-0.12px">View</div>
<svg style="left:524px;top:564.8px" width="22" height="22" viewBox="0 0 22 22"><path d="M0.3 11 Q4.5 3.8 10.7 3.8 Q16.9 3.8 21 11 Q16.9 18 10.7 18 Q4.5 18 0.3 11Z" fill="#fff"/><circle cx="10.7" cy="11" r="4.2" fill="#be1a2e"/><circle cx="10.7" cy="11" r="2" fill="#fff"/></svg>
<svg style="left:711px;top:569.6px" width="8" height="12"><path d="M0.8 0.8 L6 5.5 L0.8 10.2Z" fill="#fff"/></svg>
<div class="t" style="left:552px;top:602.05px;font-size:14px;color:#eeeeee;font-weight:normal;letter-spacing:-0.12px">Attachments</div>
<svg style="left:524px;top:599.1px" width="22" height="22" viewBox="0 0 22 22"><rect x="0.5" y="0.5" width="20.5" height="20.5" rx="2" fill="#9a9a9a"/><path d="M6 15 L13.5 7.5 Q15 6 16.3 7.3 Q17.6 8.6 16.1 10.1 L9.6 16.6 Q7.6 18.6 5.6 16.6 Q3.6 14.6 5.6 12.6 L11.5 6.7" fill="none" stroke="#555" stroke-width="1.1"/></svg>
<div class="t" style="left:552px;top:631.75px;font-size:14px;color:#eeeeee;font-weight:normal;letter-spacing:-0.12px">Tasks</div>
<svg style="left:524px;top:628.8px" width="22" height="22" viewBox="0 0 22 22"><rect x="0.5" y="0.5" width="20.5" height="20.5" rx="2.2" fill="#8bc45a"/><circle cx="5" cy="6" r="1.2" fill="#474747"/><rect x="7.8" y="4.8" width="9.5" height="2.4" rx="1.2" fill="#474747"/><circle cx="5" cy="10.8" r="1.2" fill="#474747"/><rect x="7.8" y="9.6" width="9.5" height="2.4" rx="1.2" fill="#474747"/><circle cx="5" cy="15.6" r="1.2" fill="#474747"/><rect x="7.8" y="14.4" width="9.5" height="2.4" rx="1.2" fill="#474747"/></svg>
<div class="t" style="left:553.5px;top:660.55px;font-size:14px;color:#eeeeee;font-weight:normal;letter-spacing:-0.12px">Triggers</div>
<div class="t" style="left:552px;top:695.65px;font-size:14px;color:#eeeeee;font-weight:normal;letter-spacing:-0.12px">Double Click</div>
<svg style="left:524px;top:692.7px" width="22" height="22" viewBox="0 0 22 22"><path d="M4.3 19 A9 9 0 1 1 16.7 19" fill="none" stroke="#fff" stroke-width="2.2"/><path d="M6.5 11.5 A4.2 4.2 0 0 1 14.5 11.5" fill="none" stroke="#fff" stroke-width="1.1"/></svg>
<div class="t" style="left:552px;top:724.65px;font-size:14px;color:#eeeeee;font-weight:normal;letter-spacing:-0.12px">D-Click Rule</div>
<svg style="left:524px;top:721.7px" width="22" height="22" viewBox="0 0 22 22"><path d="M4.3 19 A9 9 0 1 1 16.7 19" fill="none" stroke="#a0a0a0" stroke-width="2.2"/><path d="M6.5 14 A4.5 4.5 0 0 1 14.5 14" fill="none" stroke="#a0a0a0" stroke-width="1.8"/><path d="M10.5 21V12.5" stroke="#8bc45a" stroke-width="2"/><path d="M6.8 15.5 L10.5 11.5 L14.2 15.5" fill="none" stroke="#8bc45a" stroke-width="2"/></svg>
<div class="t" style="left:553.5px;top:759.75px;font-size:14px;color:#eeeeee;font-weight:normal;letter-spacing:-0.12px">Custom Actions</div>
<svg style="left:711px;top:761.6px" width="8" height="12"><path d="M0.8 0.8 L6 5.5 L0.8 10.2Z" fill="#fff"/></svg>
<div class="abs" style="left:722px;top:562px;width:246px;height:266px;background:#474747;border:1px solid #0c0c0c;border-radius:6px;box-shadow:4px 3px 7px rgba(0,0,0,0.6)"></div>
<div class="abs" style="left:726px;top:767px;width:238px;height:29px;background:#be1a2e;border-radius:4px"></div>
<div class="t" style="left:757px;top:571.75px;font-size:14px;color:#8a8a8a;font-weight:normal;letter-spacing:0px">View CLR</div>
<div class="t" style="left:756px;top:600.55px;font-size:14px;color:#eeeeee;font-weight:normal;letter-spacing:0px">Type Table+</div>
<svg style="left:728px;top:598.2px" width="20" height="21"><rect x="0" y="0" width="19.2" height="20.4" rx="3" fill="#3597d3"/><rect x="2.3" y="7.6" width="3.9" height="2.1" rx="0.4" fill="#f5a623"/><rect x="7.5" y="7.6" width="3.9" height="2.1" rx="0.4" fill="#f5a623"/><rect x="12.7" y="7.6" width="3.9" height="2.1" rx="0.4" fill="#f5a623"/><rect x="2.3" y="11.55" width="3.9" height="2.1" rx="0.4" fill="#f5a623"/><rect x="7.5" y="11.55" width="3.9" height="2.1" rx="0.4" fill="#f5a623"/><rect x="12.7" y="11.55" width="3.9" height="2.1" rx="0.4" fill="#f5a623"/><rect x="2.3" y="15.5" width="3.9" height="2.1" rx="0.4" fill="#f5a623"/><rect x="7.5" y="15.5" width="3.9" height="2.1" rx="0.4" fill="#f5a623"/><rect x="12.7" y="15.5" width="3.9" height="2.1" rx="0.4" fill="#f5a623"/></svg>
<div class="t" style="left:756px;top:629.85px;font-size:14px;color:#eeeeee;font-weight:normal;letter-spacing:0px">Type Table</div>
<svg style="left:728px;top:627.5px" width="20" height="21"><rect x="0" y="0" width="19.2" height="20.4" rx="3" fill="#3597d3"/><rect x="2.3" y="7.6" width="3.9" height="2.1" rx="0.4" fill="#fff"/><rect x="7.5" y="7.6" width="3.9" height="2.1" rx="0.4" fill="#fff"/><rect x="12.7" y="7.6" width="3.9" height="2.1" rx="0.4" fill="#fff"/><rect x="2.3" y="11.55" width="3.9" height="2.1" rx="0.4" fill="#f5a623"/><rect x="7.5" y="11.55" width="3.9" height="2.1" rx="0.4" fill="#f5a623"/><rect x="12.7" y="11.55" width="3.9" height="2.1" rx="0.4" fill="#f5a623"/><rect x="2.3" y="15.5" width="3.9" height="2.1" rx="0.4" fill="#fff"/><rect x="7.5" y="15.5" width="3.9" height="2.1" rx="0.4" fill="#fff"/><rect x="12.7" y="15.5" width="3.9" height="2.1" rx="0.4" fill="#fff"/></svg>
<div class="t" style="left:757px;top:657.95px;font-size:14px;color:#eeeeee;font-weight:normal;letter-spacing:0px">Type Table with visible only</div>
<div class="t" style="left:756px;top:686.05px;font-size:14px;color:#eeeeee;font-weight:normal;letter-spacing:0px">Table with selected</div>
<div class="t" style="left:757px;top:715.75px;font-size:14px;color:#8a8a8a;font-weight:normal;letter-spacing:0px">Table with all Affecting Objects</div>
<div class="t" style="left:757px;top:744.35px;font-size:14px;color:#8a8a8a;font-weight:normal;letter-spacing:0px">Table with All Aliases</div>
<div class="t" style="left:756px;top:772.45px;font-size:14px;color:#ffffff;font-weight:normal;letter-spacing:0px">View Master Node</div>
<svg style="left:727px;top:774.3px" width="22" height="14"><circle cx="13.8" cy="7" r="5.6" fill="none" stroke="#fff" stroke-width="1.3"/><circle cx="7.5" cy="7" r="6.2" fill="#fff"/></svg>
<div class="t" style="left:757px;top:801.75px;font-size:14px;color:#8a8a8a;font-weight:normal;letter-spacing:0px">Composite View</div>
<svg style="left:864px;top:774px" width="16" height="22" viewBox="0 0 16 22"><path d="M1 1 L1 16.5 L4.8 13 L7.6 19.5 L10.2 18.4 L7.5 12 L12.5 12Z" fill="#fff" stroke="#000" stroke-width="1"/></svg>
</body></html>
